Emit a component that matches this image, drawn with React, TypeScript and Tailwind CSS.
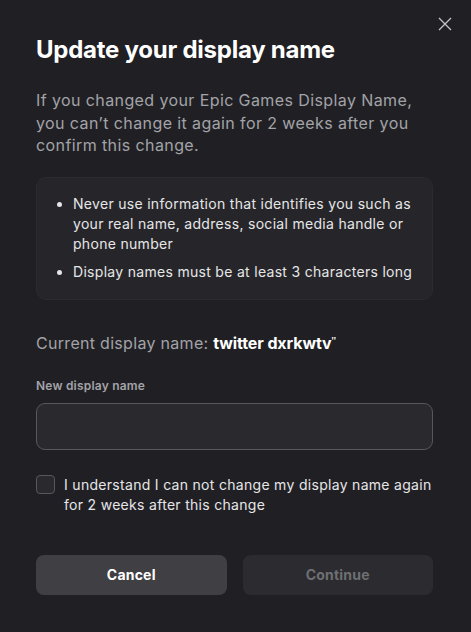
export default function App() {
  return (
    <div className="w-[471px] h-[632px] bg-[#202024] text-white relative" style={{ fontFamily: 'Inter, "Noto Sans", sans-serif' }}>
      <button className="absolute right-[19px] top-[17px] w-[14px] h-[14px] text-[#c4c4c6]">
        <svg viewBox="0 0 14 14" width="14" height="14" fill="none" stroke="currentColor" strokeWidth="1.3">
          <path d="M1 1 L13 13 M13 1 L1 13" />
        </svg>
      </button>

      <div className="pl-[36px] pr-[38px] pt-[36px]">
        <h1 className="text-[24px] font-bold leading-[28px] tracking-[-0.25px]">Update your display name</h1>

        <p className="mt-[25px] text-[16px] leading-[22.5px] tracking-[0.4px] text-[#a3a3a8]">
          If you changed your Epic Games Display Name, you can’t change it again for 2 weeks after you confirm this change.
        </p>

        <div className="mt-[20px] rounded-[10px] bg-[#26262a] border border-[#2b2b2f] pl-[36px] pr-[14px] pt-[16px] pb-[17px]">
          <ul className="list-disc text-[14px] leading-[20px] tracking-[0.3px] text-[#e6e6e8] flex flex-col gap-[8px]">
            <li>Never use information that identifies you such as your real name, address, social media handle or phone number</li>
            <li>Display names must be at least 3 characters long</li>
          </ul>
        </div>

        <p className="mt-[32px] text-[16px] leading-[22px] tracking-[0.3px] text-[#a3a3a8]">
          Current display name:{' '}
          <span className="font-bold text-white tracking-[-0.1px]">twitter dxrkwtv<sup className="text-[9px] font-bold">ʺ</sup></span>
        </p>

        <label className="block mt-[24px] text-[12px] leading-[16px] font-semibold tracking-[0.2px] text-[#a3a3a8]">New display name</label>
        <input
          type="text"
          className="mt-[9px] block w-full h-[47px] rounded-[9px] bg-[#2a2a2e] border border-[#58585c] px-3 text-white outline-none"
        />

        <div className="mt-[25px] flex items-start gap-[9px]">
          <span className="w-[19px] h-[19px] shrink-0 rounded-[4px] border border-[#58585c] bg-[#2a2a2e]" />
          <span className="text-[14px] leading-[20px] tracking-[0.3px] text-[#e6e6e8]">
            I understand I can not change my display name again for 2 weeks after this change
          </span>
        </div>

        <div className="mt-[40px] grid grid-cols-2 gap-[16px]">
          <button className="h-[40px] rounded-[8px] bg-[#404044] text-[14px] font-bold tracking-[0.2px] text-white">Cancel</button>
          <button className="h-[40px] rounded-[8px] bg-[#2c2c30] text-[14px] font-bold tracking-[0.2px] text-[#6f6f73]">Continue</button>
        </div>
      </div>
    </div>
  )
}
